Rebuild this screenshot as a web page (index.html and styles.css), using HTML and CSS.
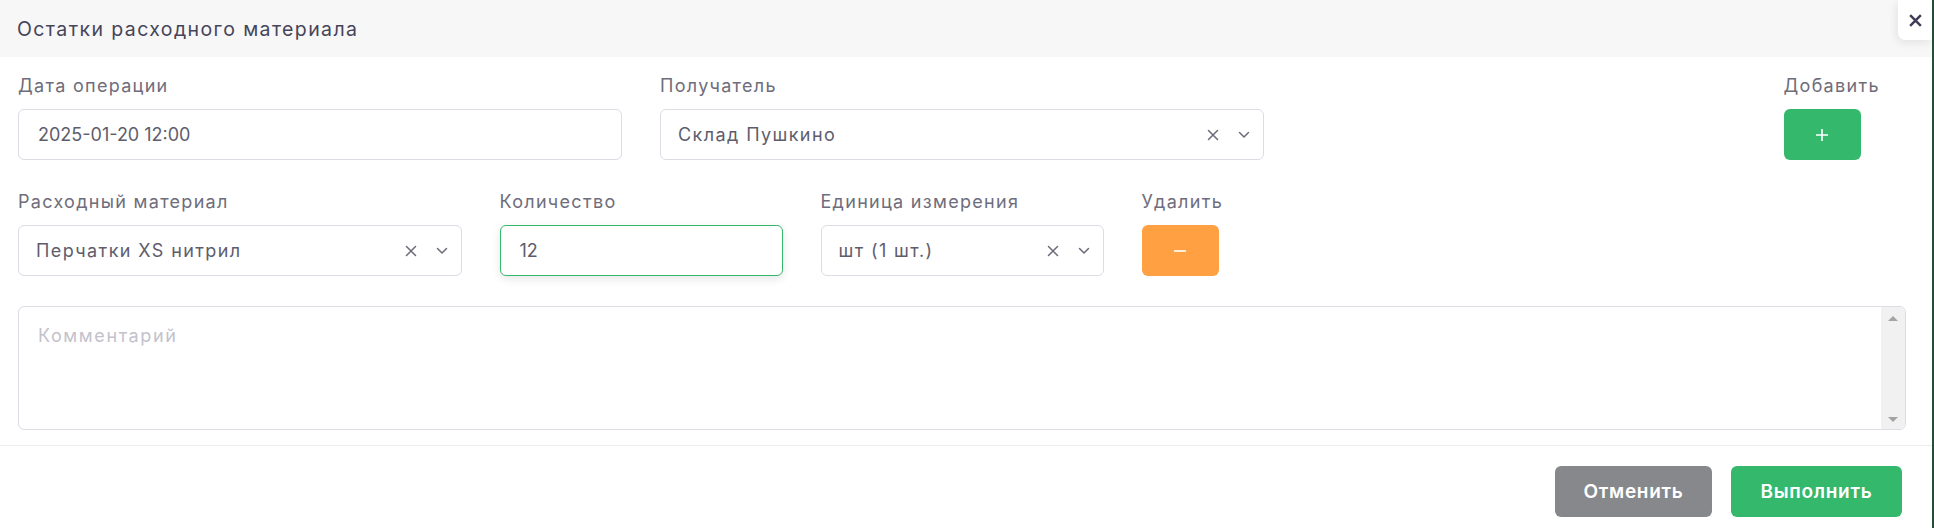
FILE: index.html
```html
<!DOCTYPE html>
<html lang="ru">
<head>
<meta charset="utf-8">
<title>Остатки расходного материала</title>
<link rel="stylesheet" href="styles.css">
</head>
<body>
<div class="page">
  <div class="modal">
    <div class="modal-header">
      <h1 class="modal-title">Остатки расходного материала</h1>
    </div>
    <div class="modal-body">
      <div class="grid-row">
        <div class="field span-4">
          <label class="field-label">Дата операции</label>
          <div class="control"><span class="control-text numeric">2025-01-20 12:00</span></div>
        </div>
        <div class="field span-4">
          <label class="field-label">Получатель</label>
          <div class="control select">
            <span class="control-text">Склад Пушкино</span>
            <span class="select-icons">
              <svg class="ico-clear" viewBox="0 0 12 12" width="12" height="12"><path d="M1.5 1.5 L10.5 10.5 M10.5 1.5 L1.5 10.5" stroke="#6b6a78" stroke-width="1.5" fill="none" stroke-linecap="round"/></svg>
              <svg class="ico-chev" viewBox="0 0 12 8" width="12" height="8"><path d="M1.5 1.5 L6 6 L10.5 1.5" stroke="#6b6a78" stroke-width="1.5" fill="none" stroke-linecap="round" stroke-linejoin="round"/></svg>
            </span>
          </div>
        </div>
        <div class="field col-last">
          <label class="field-label">Добавить</label>
          <button class="icon-btn btn-add" type="button">
            <svg viewBox="0 0 14 14" width="14" height="14"><path d="M7 1 V13 M1 7 H13" stroke="#fff" stroke-width="1.6" fill="none"/></svg>
          </button>
        </div>
      </div>

      <div class="grid-row">
        <div class="field span-3">
          <label class="field-label">Расходный материал</label>
          <div class="control select">
            <span class="control-text">Перчатки XS нитрил</span>
            <span class="select-icons">
              <svg class="ico-clear" viewBox="0 0 12 12" width="12" height="12"><path d="M1.5 1.5 L10.5 10.5 M10.5 1.5 L1.5 10.5" stroke="#6b6a78" stroke-width="1.5" fill="none" stroke-linecap="round"/></svg>
              <svg class="ico-chev" viewBox="0 0 12 8" width="12" height="8"><path d="M1.5 1.5 L6 6 L10.5 1.5" stroke="#6b6a78" stroke-width="1.5" fill="none" stroke-linecap="round" stroke-linejoin="round"/></svg>
            </span>
          </div>
        </div>
        <div class="field span-2">
          <label class="field-label">Количество</label>
          <div class="control focused"><span class="control-text numeric">12</span></div>
        </div>
        <div class="field span-2">
          <label class="field-label">Единица измерения</label>
          <div class="control select">
            <span class="control-text">шт (1 шт.)</span>
            <span class="select-icons">
              <svg class="ico-clear" viewBox="0 0 12 12" width="12" height="12"><path d="M1.5 1.5 L10.5 10.5 M10.5 1.5 L1.5 10.5" stroke="#6b6a78" stroke-width="1.5" fill="none" stroke-linecap="round"/></svg>
              <svg class="ico-chev" viewBox="0 0 12 8" width="12" height="8"><path d="M1.5 1.5 L6 6 L10.5 1.5" stroke="#6b6a78" stroke-width="1.5" fill="none" stroke-linecap="round" stroke-linejoin="round"/></svg>
            </span>
          </div>
        </div>
        <div class="field span-1">
          <label class="field-label">Удалить</label>
          <button class="icon-btn btn-remove" type="button">
            <svg viewBox="0 0 14 4" width="14" height="4"><path d="M1 2 H13" stroke="#fff" stroke-width="1.6" fill="none"/></svg>
          </button>
        </div>
      </div>

      <div class="comment">
        <div class="comment-text">Комментарий</div>
        <div class="scrollbar">
          <span class="arrow arrow-up"></span>
          <span class="arrow arrow-down"></span>
        </div>
      </div>
    </div>
    <div class="modal-footer">
      <button class="btn btn-cancel" type="button">Отменить</button>
      <button class="btn btn-submit" type="button">Выполнить</button>
    </div>
    <button class="close-btn" type="button" aria-label="Закрыть">
      <svg viewBox="0 0 14 14" width="15" height="15"><path d="M2 2 L12 12 M12 2 L2 12" stroke="#3f3d56" stroke-width="2.3" fill="none"/></svg>
    </button>
  </div>
  <div class="edge-line"></div>
</div>
</body>
</html>
```

FILE: styles.css
```css
* { box-sizing: border-box; }
html, body { margin: 0; padding: 0; background: #fff; }
body {
  font-family: "Inter", "Noto Sans", sans-serif;
  color: #5e5d6c;
  width: 1934px;
  height: 528px;
  overflow: hidden;
}
.page {
  display: flex;
  height: 528px;
}
.modal {
  position: relative;
  width: 1932px;
  display: flex;
  flex-direction: column;
  background: #fff;
}
.edge-line {
  width: 2px;
  background: #234f3c;
}
.modal-header {
  height: 57px;
  background: #f7f7f7;
  display: flex;
  align-items: center;
  padding-left: 17px;
}
.modal-title {
  margin: 0;
  font-size: 19.5px;
  font-weight: 400;
  color: #46445a;
  letter-spacing: 1.4px;
}
.modal-body {
  padding: 17px 26px 15px 18px;
}
.grid-row {
  display: grid;
  grid-template-columns: repeat(12, 1fr);
  column-gap: 38px;
  margin-bottom: 30px;
}
.span-4 { grid-column: span 4; }
.span-3 { grid-column: span 3; }
.span-2 { grid-column: span 2; }
.span-1 { grid-column: span 1; }
.col-last { grid-column: 12 / 13; }
.field { display: flex; flex-direction: column; align-items: flex-start; }
.field-label {
  font-size: 18px;
  line-height: 24px;
  color: #6e6d7b;
  margin-bottom: 11px;
  white-space: nowrap;
  letter-spacing: 1.3px;
}
.control {
  width: 100%;
  height: 51px;
  border: 1px solid #dddce4;
  border-radius: 6px;
  display: flex;
  align-items: center;
  padding: 0 18px 0 19px;
  background: #fff;
}
.control.focused {
  border-color: #35b86b;
  box-shadow: 0 3px 10px rgba(0, 0, 0, 0.1);
}
.control-text {
  flex: 1;
  font-size: 18px;
  color: #5e5d6c;
  letter-spacing: 1.4px;
  white-space: nowrap;
}
.control-text.numeric { letter-spacing: 0; }
.select { padding-left: 17px; padding-right: 13px; }
.select-icons {
  display: flex;
  align-items: center;
  gap: 19px;
}
.icon-btn {
  width: 77px;
  height: 51px;
  border: none;
  border-radius: 6px;
  display: flex;
  align-items: center;
  justify-content: center;
  padding: 0;
}
.btn-add { background: #34b96c; }
.btn-remove { background: #ffa043; }

.comment {
  display: flex;
  height: 124px;
  border: 1px solid #dddce4;
  border-radius: 6px;
  overflow: hidden;
}
.comment-text {
  flex: 1;
  padding: 17px 19px;
  font-size: 18px;
  line-height: 24px;
  color: #c3c2cc;
  letter-spacing: 1.6px;
}
.scrollbar {
  width: 24px;
  background: #f1f1f1;
  display: flex;
  flex-direction: column;
  justify-content: space-between;
  align-items: center;
  padding: 9px 0 7px;
}
.arrow {
  width: 0;
  height: 0;
  border-left: 5px solid transparent;
  border-right: 5px solid transparent;
}
.arrow-up { border-bottom: 5px solid #a3a3a3; }
.arrow-down { border-top: 5px solid #a3a3a3; }

.modal-footer {
  border-top: 1px solid #ececec;
  display: flex;
  justify-content: flex-end;
  gap: 19px;
  padding: 20px 30px 0 0;
}
.btn {
  height: 51px;
  border: none;
  border-radius: 6px;
  color: #fff;
  font-family: "Inter", "Noto Sans", sans-serif;
  font-size: 19px;
  font-weight: 600;
  letter-spacing: 0.7px;
  padding: 0;
}
.btn-cancel { background: #86888c; width: 157px; }
.btn-submit { background: #34b86b; width: 171px; }

.close-btn {
  position: absolute;
  top: 0;
  right: 0;
  width: 34px;
  height: 40px;
  border: none;
  background: #fff;
  border-bottom-left-radius: 7px;
  box-shadow: -2px 3px 8px rgba(0, 0, 0, 0.08);
  display: flex;
  align-items: center;
  justify-content: center;
  padding: 0;
}
```
